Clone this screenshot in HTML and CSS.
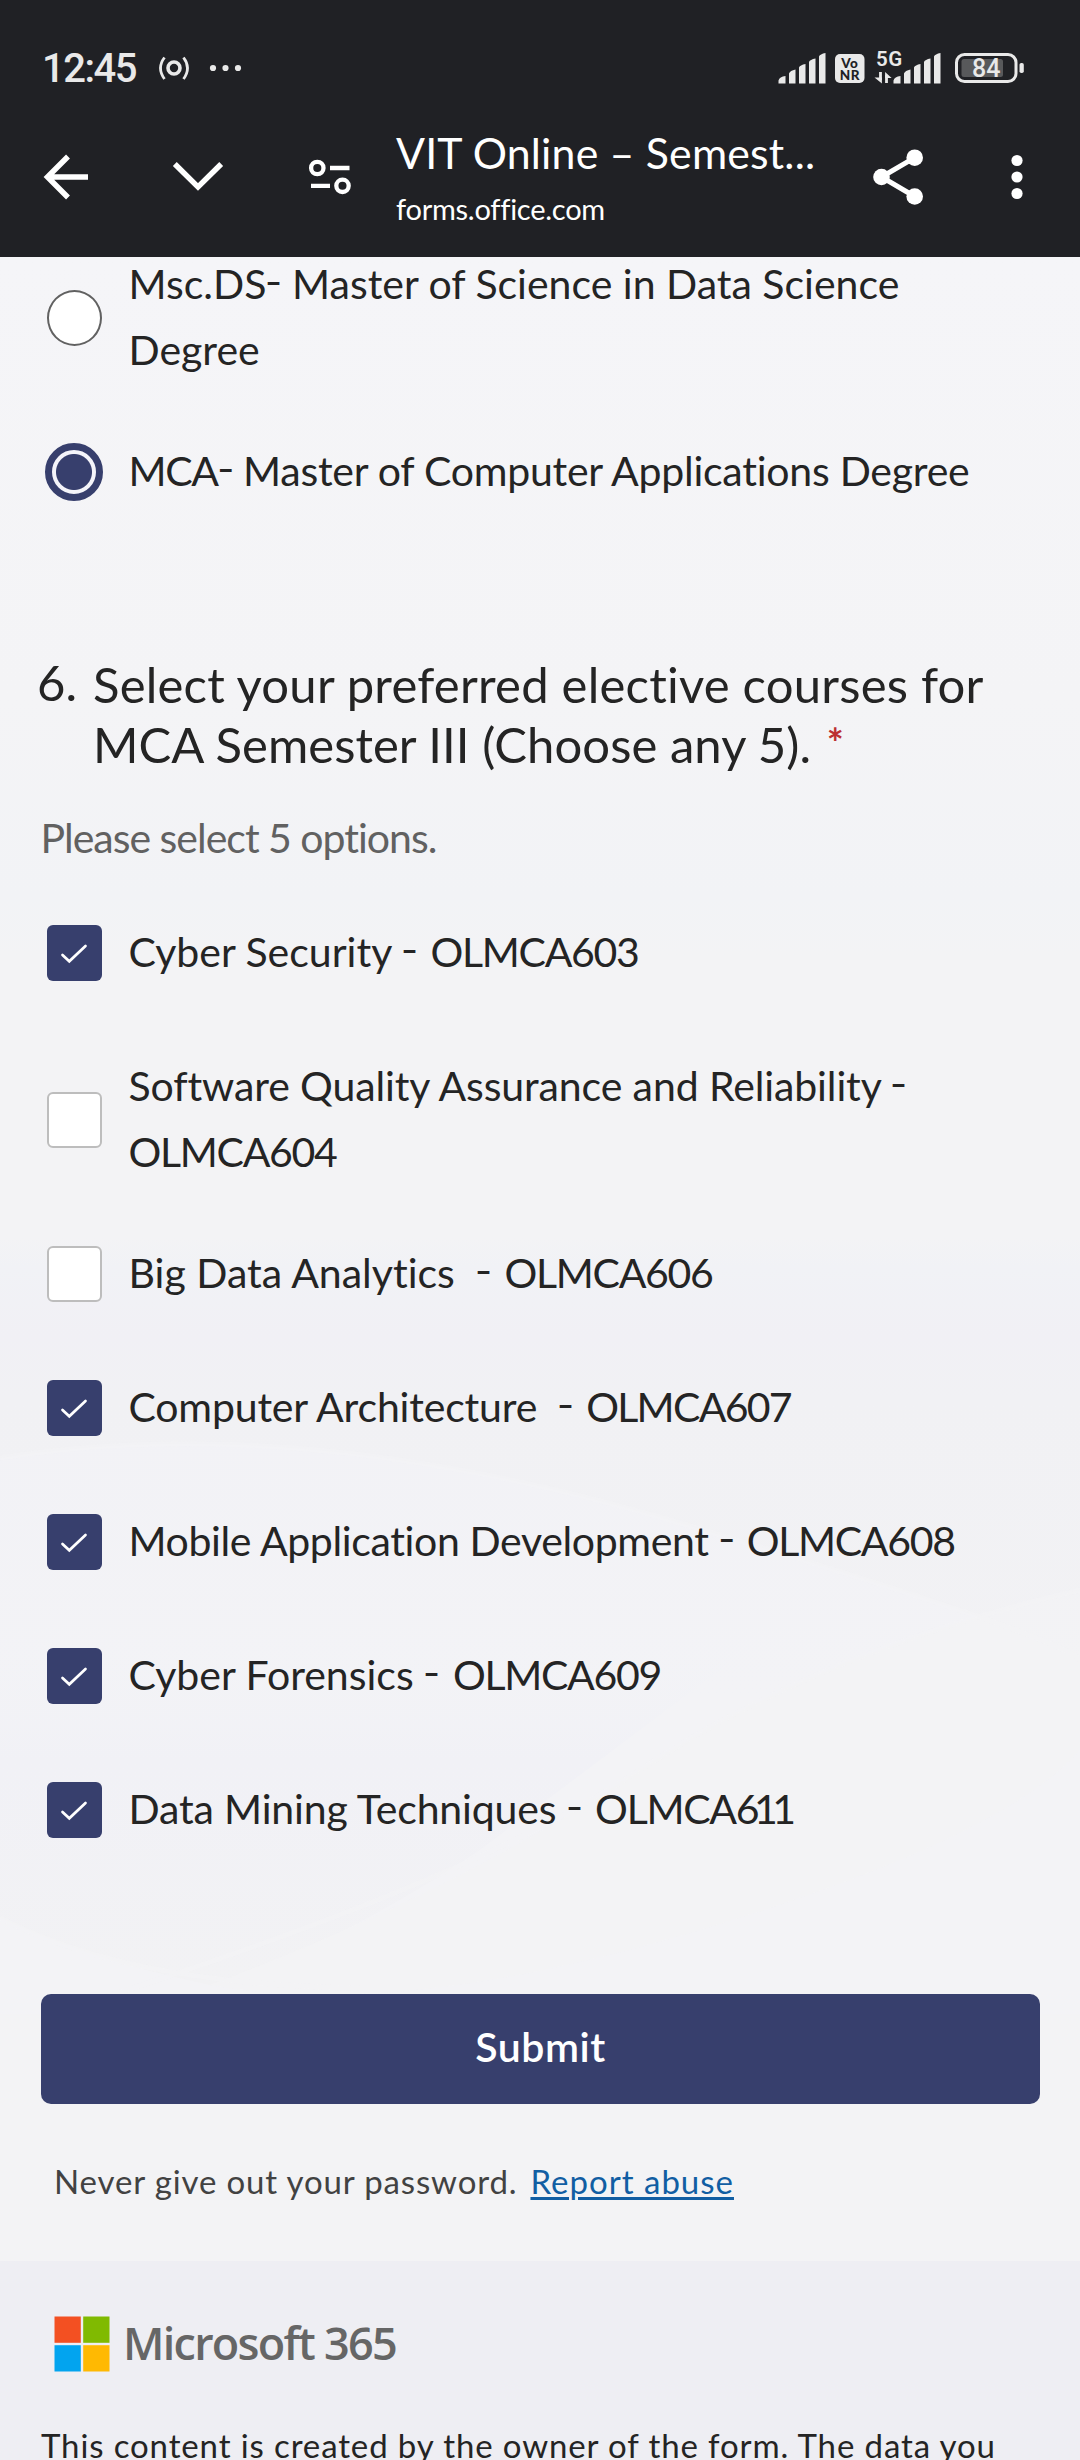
FILE: index.html
```html
<!DOCTYPE html>
<html lang="en">
<head>
<meta charset="utf-8">
<title>VIT Online – Semester electives</title>
<link rel="stylesheet" href="styles.css">
</head>
<body>
<header class="browser">
  <div class="status">
    <span class="clock">12:45</span>
    <svg class="status-left" width="84" height="30" viewBox="158 53 84 30">
      <circle cx="174" cy="68" r="6" fill="none" stroke="#e9e9e9" stroke-width="3.6"/>
      <path d="M164.5 57.5Q156.500 68 164.500 79M183.500 57.500Q191.500 68 183.500 79" fill="none" stroke="#e9e9e9" stroke-width="2.800"/>
      <g fill="#e9e9e9"><circle cx="213" cy="68" r="3.100"/><circle cx="225.500" cy="68" r="3.100"/><circle cx="238" cy="68" r="3.100"/></g>
    </svg>
    <svg class="status-right" width="248" height="54" viewBox="778 38 248 54">
      <g id="bars" fill="#e9e9e9">
        <path d="M778.500 83.500v-3q1-4 7-4.500v7.500zM789 83.500v-10q1-3 6.500-4v14zM799 83.500v-16q1-2.500 6.500-3.500v19.500zM809 83.500v-21.500q1-2.500 6.500-3.500v25zM819 83.500v-27q1-2.500 6.500-3.500v30.500z"/>
      </g>
      <rect x="835" y="54" width="29.500" height="29" rx="5" fill="#e9e9e9"/>
      <text class="vonr" x="849.800" y="67.500">Vo</text>
      <text class="vonr" x="849.800" y="80">NR</text>
      <text class="net" x="876" y="65.500">5G</text>
      <path d="M880.500 72v8M886.500 83v-8" stroke="#e9e9e9" stroke-width="2.800"/>
      <path d="M874.500 77.500h7.400v6zM885.100 72v6h6.500z" fill="#e9e9e9"/>
      <use href="#bars" x="115"/>
      <rect x="956.500" y="54.500" width="59.500" height="27" rx="8" fill="none" stroke="#e9e9e9" stroke-width="3"/>
      <rect x="961.500" y="59" width="41.500" height="18" rx="2.500" fill="#58595b"/>
      <rect x="1019.500" y="63" width="4.300" height="10" rx="1.800" fill="#e9e9e9"/>
      <text class="charge" x="986.300" y="77">84</text>
    </svg>
  </div>
  <div class="toolbar">
    <svg class="icon-back" width="46" height="46" viewBox="43 154 46 46"><path d="M88 177H48M68 156.500L47.500 177L68 197.500" fill="none" stroke="#fff" stroke-width="5.500"/></svg>
    <svg class="icon-down" width="54" height="32" viewBox="171 162 54 32"><path d="M174.800 165L198 188L221.200 165" fill="none" stroke="#fff" stroke-width="5.500"/></svg>
    <svg class="icon-tune" width="44" height="36" viewBox="308 159 44 36"><g fill="none" stroke="#fff" stroke-width="4.300"><circle cx="317.300" cy="168" r="6.200"/><circle cx="342.500" cy="185.800" r="6.200"/><path d="M330 168h19.500M311 185.800h19"/></g></svg>
    <div class="page-info">
      <div class="page-title">VIT Online – Semest...</div>
      <div class="page-host">forms.office.com</div>
    </div>
    <svg class="icon-share" width="52" height="58" viewBox="872 148 52 58"><path d="M914.700 157.700L881.500 177L914.700 196.500" fill="none" stroke="#fff" stroke-width="5"/><g fill="#fff"><circle cx="914.700" cy="157.700" r="8.300"/><circle cx="881.500" cy="177" r="8.300"/><circle cx="914.700" cy="196.500" r="8.300"/></g></svg>
    <svg class="icon-more" width="12" height="46" viewBox="1011 154 12 46"><g fill="#fff"><circle cx="1017" cy="160.500" r="5.600"/><circle cx="1017" cy="177" r="5.600"/><circle cx="1017" cy="193.500" r="5.600"/></g></svg>
  </div>
</header>

<main class="form">
  <svg class="backdrop" width="1080" height="614" viewBox="0 1400 1080 614">
    <path d="M0 1458Q300 1410 680 1523T1080 1660V2014H0z" fill="#f4f4f6" opacity=".6"/>
    <path d="M0 1640H760Q560 1790 480 1850Q330 1950 210 1985Q90 1960 0 1918z" fill="url(#shade)"/>
    <path d="M1080 1590Q820 1650 640 1770T210 1985Q400 2020 700 1930T1080 1750z" fill="#f3f3f5" opacity=".6"/>
    <path d="M0 1458Q300 1410 680 1523T1080 1660M1080 1590Q820 1650 640 1770T0 2030M0 1918Q130 1985 360 1988" fill="none" stroke="#f5f5f7" stroke-width="5" opacity=".45"/>
    <defs><linearGradient id="shade" x2="0" y2="1"><stop offset="0" stop-color="#f2f3f7" stop-opacity="0"/><stop offset=".35" stop-color="#f1f1f6"/><stop offset="1" stop-color="#f2f2f4"/></linearGradient></defs>
  </svg>

  <div class="options programs">
    <div class="option two-line"><span class="control radio"></span><div class="label">Msc.DS<i class="dash">-</i> Master of Science in Data Science<br>Degree</div></div>
    <div class="option"><span class="control radio selected"></span><div class="label mca"><span class="code">MCA</span><i class="dash">-</i> Master of Computer Applications Degree</div></div>
  </div>

  <div class="question">
    <span class="number">6.</span>
    <h2 class="prompt"><span class="first-line">Select your preferred elective courses for</span><br>MCA Semester III (Choose any 5). <span class="required">*</span></h2>
  </div>
  <p class="hint">Please select 5 options.</p>

  <div class="options courses">
    <div class="option"><span class="control box checked"><svg width="55" height="56" viewBox="0 0 55 56"><path d="M15.500 30L22.300 36.300L38.500 21"/></svg></span><div class="label">Cyber Security <i class="dash">-</i> <span class="code">OLMCA603</span></div></div>
    <div class="option two-line"><span class="control box"></span><div class="label"><span class="software">Software Quality Assurance and Reliability <i class="dash">-</i></span><br><span class="code">OLMCA604</span></div></div>
    <div class="option"><span class="control box"></span><div class="label">Big Data Analytics&nbsp; <i class="dash">-</i> <span class="code">OLMCA606</span></div></div>
    <div class="option"><span class="control box checked"><svg width="55" height="56" viewBox="0 0 55 56"><path d="M15.500 30L22.300 36.300L38.500 21"/></svg></span><div class="label computer">Computer Architecture&nbsp; <i class="dash">-</i> <span class="code seven">OLMCA607</span></div></div>
    <div class="option"><span class="control box checked"><svg width="55" height="56" viewBox="0 0 55 56"><path d="M15.500 30L22.300 36.300L38.500 21"/></svg></span><div class="label mobile">Mobile Application Development <i class="dash">-</i> <span class="code">OLMCA608</span></div></div>
    <div class="option"><span class="control box checked"><svg width="55" height="56" viewBox="0 0 55 56"><path d="M15.500 30L22.300 36.300L38.500 21"/></svg></span><div class="label">Cyber Forensics <i class="dash">-</i> <span class="code">OLMCA609</span></div></div>
    <div class="option"><span class="control box checked"><svg width="55" height="56" viewBox="0 0 55 56"><path d="M15.500 30L22.300 36.300L38.500 21"/></svg></span><div class="label mining">Data Mining Techniques <i class="dash">-</i> <span class="code">OLMCA<span class="narrow">611</span></span></div></div>
  </div>

  <button class="submit" type="button">Submit</button>
  <p class="notice">Never give out your password.<a class="report" href="#">Report abuse</a></p>
</main>

<footer class="footer">
  <div class="brand">
    <svg width="56" height="56" viewBox="0 0 56 56"><path fill="#f35022" d="M.5.500h26.300v26.300H.5z"/><path fill="#80ba01" d="M29.200.500h26.300v26.300H29.200z"/><path fill="#02a4ef" d="M.5 29.200h26.300v26.300H.5z"/><path fill="#ffb902" d="M29.200 29.200h26.300v26.300H29.200z"/></svg>
    <span class="brand-name">Microsoft 365</span>
  </div>
  <p class="disclaimer">This content is created by the owner of the form. The data you</p>
</footer>
</body>
</html>
```
FILE: styles.css
```css
* { box-sizing: border-box; }
html, body { margin: 0; width: 1080px; height: 2460px; overflow: hidden; }
body {
  font-family: Lato, "Open Sans", sans-serif;
  font-variant-ligatures: none;
  color: #242424;
  background: #f3f3f5;
  display: flex;
  flex-direction: column;
}
p, h2 { margin: 0; font-weight: 400; }
svg { display: block; flex: none; }

/* Browser chrome */
.browser {
  position: relative;
  z-index: 1;
  flex: none;
  height: 257px;
  background: #202125;
  color: #fff;
}
.status { display: flex; height: 98px; padding: 0 54px 0 42px; }
.clock {
  width: 116px;
  padding-top: 45px;
  font: 500 40px/48px Roboto, sans-serif;
  letter-spacing: -1.500px;
  color: #e9e9e9;
}
.status-left { margin-top: 53px; }
.status-right { margin: 38px 0 0 auto; }
.vonr { font: 900 13.500px Lato, sans-serif; text-anchor: middle; fill: #202125; letter-spacing: .5px; }
.net { font: 600 20.500px Roboto, sans-serif; fill: #e9e9e9; letter-spacing: .5px; }
.charge { font: 500 25px Roboto, sans-serif; text-anchor: middle; fill: #e9e9e9; }

.toolbar { display: flex; align-items: center; height: 158px; padding: 0 57px 0 43px; }
.icon-down { margin-left: 82px; }
.icon-tune { margin-left: 83px; }
.page-info { margin: -3px auto 0 44px; }
.page-title { font-size: 42.800px; line-height: 52px; letter-spacing: .2px; white-space: nowrap; margin-top: 2px; }
.page-host { margin-top: 12px; font-size: 29px; line-height: 36px; letter-spacing: -.25px; }
.icon-more { margin-left: 87px; }

/* Form */
.form {
  position: relative;
  z-index: 0;
  flex: none;
  height: 2004px;
  padding: 0 40px 0 41px;
  background: linear-gradient(#f5f5f8 0, #f4f4f6 440px, #f2f3f6 640px, #f3f3f5 700px, #f3f3f5 980px, #f1f2f6 1010px, #f1f0f5 1080px, #f1f1f4 1140px, #f3f3f5 1740px, #f3f3f5 100%);
}
.backdrop { position: absolute; left: 0; top: 1143px; z-index: -1; }
.options { display: flex; flex-direction: column; gap: 68px; padding-left: 4px; }
.programs { margin-top: -6px; }
.option { display: flex; align-items: center; gap: 25.500px; font-size: 41px; line-height: 66px; white-space: nowrap; }
.two-line { margin-bottom: -13px; }
.control { flex: none; margin: 2px 1.500px 0; width: 55px; height: 56px; }
.radio { border: 2.500px solid #616161; border-radius: 50%; background: #fff; }
.radio.selected {
  width: 58px;
  height: 58px;
  margin: 2px 0 0;
  border: 7px solid #373f6d;
  background: radial-gradient(circle, #373f6d 17.500px, #f4f4fa 18.500px);
}
.box { border: 2.500px solid #bdbdbd; border-radius: 6px; background: #fff; }
.box.checked { border: 0; background: #373f6d; }
.box path { fill: none; stroke: #fff; stroke-width: 2.700px; stroke-linecap: round; }
.dash { font-style: normal; display: inline-block; line-height: 0; transform: translateY(-3px) scaleX(1.150); }
.courses .dash { margin-right: 3px; }
.code { letter-spacing: -1.300px; }
.code.seven { letter-spacing: -1.700px; }
.code .narrow { letter-spacing: -5.500px; }
.mca { letter-spacing: -.24px; }
.software { letter-spacing: -.11px; }
.computer { letter-spacing: -.18px; }
.mobile { letter-spacing: -.36px; }
.mining { letter-spacing: -.16px; }

.question { display: flex; margin: 150px 0 0 -4px; font-size: 49px; line-height: 60px; }
.number { width: 56px; margin-top: -2.500px; }
.prompt { font-size: 49px; letter-spacing: .05px; white-space: nowrap; }
.first-line { letter-spacing: .22px; }
.required { color: #bc2f32; font-size: 40px; line-height: 0; vertical-align: 5px; font-weight: 700; margin-left: 3px; }
.hint { margin: 31px 0 48px -.5px; font-size: 41px; line-height: 66px; letter-spacing: -1px; color: #616161; }

.submit {
  display: block;
  width: 999px;
  height: 110px;
  margin-top: 152px;
  padding: 0 0 5px;
  border: 0;
  border-radius: 10px;
  background: #373f6d;
  color: #fff;
  font: 600 41px/49px Lato, sans-serif;
  letter-spacing: .5px;
}
.notice { margin: 53px 0 0 13px; font-size: 33px; line-height: 48px; letter-spacing: .86px; color: #424242; white-space: nowrap; }
.report { margin-left: 13px; color: #115ea3; letter-spacing: 1px; text-decoration: underline; text-decoration-thickness: 3px; text-underline-offset: 3px; }

/* Footer */
.footer { flex: none; height: 199px; padding: 54.500px 40px 0 41px; background: #eeeef3; overflow: hidden; }
.brand { display: flex; align-items: center; gap: 13px; padding-left: 13px; }
.brand-name { margin-top: -2px; font: 600 45px/56px "Open Sans", sans-serif; letter-spacing: -1.740px; color: #666; }
.disclaimer { margin-top: 49px; font-size: 33px; line-height: 48px; letter-spacing: .88px; white-space: nowrap; }
```
